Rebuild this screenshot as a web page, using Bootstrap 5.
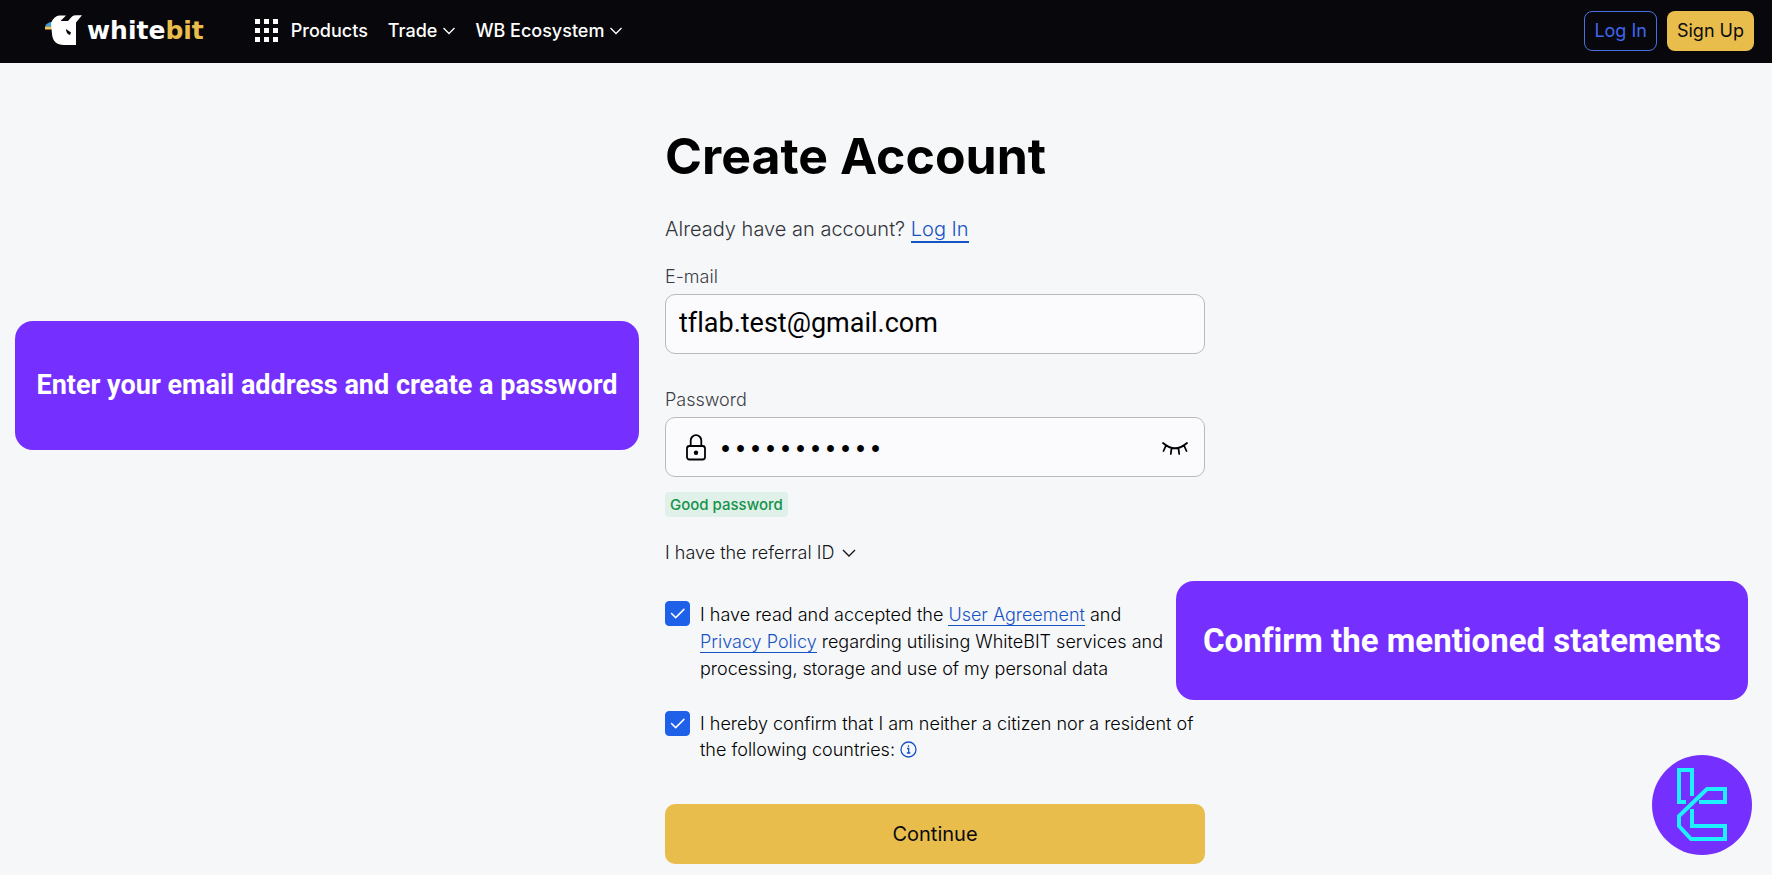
<!DOCTYPE html>
<html lang="en">
<head>
<meta charset="utf-8">
<meta name="viewport" content="width=device-width, initial-scale=1">
<title>WhiteBIT – Create Account</title>
<link href="https://cdn.jsdelivr.net/npm/bootstrap@5.3.0/dist/css/bootstrap.min.css" rel="stylesheet">
<style>
  body { font-family: Inter, "Liberation Sans", sans-serif; background: #f6f7f9; color: #0b0b0e; }
  .topbar { background: #08080c; height: 63px; padding: 0 18px 2px 45px; }
  .brand-word { font: 700 25px/28px "DejaVu Sans", sans-serif; color: #fff; }
  .brand-word span { color: #e9bd4c; }
  .main-nav { margin-left: 51px; gap: 20px; }
  .topbar .nav-link { color: #fff; font-size: 18px; font-weight: 500; line-height: 24px; padding: 0; gap: 6px; }
  .topbar .nav-products { gap: 13px; }
  .topbar .btn { font-size: 18px; line-height: 24px; height: 40px; padding: 0 10px; border-radius: 8px; }
  .topbar .btn-login { color: #3f66f0; border: 1px solid #4a70e0; padding: 0 9px; }
  .topbar-actions { gap: 10px; }
  .btn-gold, .btn-gold:hover { background: #e9bd4c; color: #0b0b0e; border: 0; }

  .signup-grid { display: grid; grid-template-columns: 624fr 566fr 547fr; padding: 0 20px 0 15px; }
  .form-column { margin-left: 26px; padding: 63px 0 11px; }
  .aside-right { margin-left: -29px; }
  .callout { background: #7530ff; color: #fff; border-radius: 18px; font-family: Roboto, sans-serif; font-weight: 700; white-space: nowrap; font-variant-ligatures: none; }
  .callout-email { margin-top: 258px; height: 129px; font-size: 27px; }
  .callout-confirm { margin-top: 518px; height: 119px; font-size: 33px; }
  .assistant { margin-top: 55px; }

  h1 { font-size: 50px; line-height: 60px; font-weight: 700; color: #000; margin: 0 0 28px; }
  .intro { font-size: 20px; line-height: 30px; font-weight: 300; color: #33353b; margin: 0 0 21px; }
  .form-column a { color: #1653c5; text-decoration: none; border-bottom: 1px solid #1653c5; }
  .form-column .intro a { border-bottom-width: 2px; }
  .form-label { font-size: 18px; line-height: 24px; font-weight: 300; color: #3c3e45; margin: 0 0 5px; display: block; }
  .field { height: 60px; background: #fbfbfd; border: 1px solid #b9babd; border-radius: 10px; margin-bottom: 34px; padding: 0 13px; }
  .field input { border: 0; background: transparent; box-shadow: none; color: #000; padding: 0; height: 56px; }
  #email { font: 400 27px/56px Roboto, sans-serif; font-variant-ligatures: none; }
  #password { font: 400 25px/50px "Liberation Mono", monospace; margin-left: 12px; padding-top: 6px; }
  .field-password { margin-bottom: 15px; padding: 0 16px 0 20px; }
  .strength { background: #dff1e8; color: #16924b; font-size: 15px; font-weight: 500; line-height: 25px; padding: 0 5px; border-radius: 4px; }
  .referral { font-size: 18px; line-height: 24px; font-weight: 300; color: #17181c; margin: 24px 0 36px; }
  .check-row { gap: 10px; }
  .form-check-input { width: 25px; height: 25px; margin: 0; border-radius: 5px; flex: none; }
  .form-check-input:checked { background-color: #1f60e8; border-color: #1f60e8;
    background-image: url("data:image/svg+xml,%3Csvg xmlns='http://www.w3.org/2000/svg' viewBox='0 0 25 25'%3E%3Cpath d='M6 12.5l4.5 4.5 9-9' fill='none' stroke='%23fff' stroke-width='1.6' stroke-linecap='round' stroke-linejoin='round'/%3E%3C/svg%3E"); }
  .form-check-label { font-size: 18px; font-weight: 300; line-height: 27px; color: #000; }
  .terms { margin-bottom: 29px; }
  .residency { margin-bottom: 41px; }
  .residency .form-check-label { line-height: 26px; }
  .residency svg { vertical-align: -2px; }
  .btn-continue { height: 60px; font-size: 20px; border-radius: 10px; }
</style>
</head>
<body>
<header class="topbar d-flex align-items-center">
  <a href="#" class="d-flex align-items-center text-decoration-none" aria-label="WhiteBIT home">
    <svg width="38" height="32" viewBox="0 0 38 32" aria-hidden="true">
      <path d="M0 11.500Q2 7 7 7l2 5z" fill="#3d9ddb"/><path d="M0 11.500h8v3H0z" fill="#eec75b"/>
      <path d="M6 8Q9 1 14 .5h7L15.500 6h7.500L27 1.500Q28.500.300 31 .3h6l-6 7.200V30H19Q8 30 7 19z" fill="#fff"/>
      <path d="M21 14l5 3.500-1 2.500q-4-1-4-6z" fill="#08080c"/>
    </svg>
    <span class="brand-word ms-1">white<span>bit</span></span>
  </a>
  <nav class="main-nav d-flex align-items-center">
    <a class="nav-link nav-products d-flex align-items-center" href="#">
      <svg width="23" height="23" viewBox="0 0 23 23" fill="#fff" aria-hidden="true"><path d="M0 0h5v5H0zM9 0h5v5H9zM18 0h5v5h-5zM0 9h5v5H0zM9 9h5v5H9zM18 9h5v5h-5zM0 18h5v5H0zM9 18h5v5H9zM18 18h5v5h-5z"/></svg>Products</a>
    <a class="nav-link d-flex align-items-center" href="#">Trade
      <svg width="12" height="8" viewBox="0 0 12 8" fill="none" stroke="#fff" stroke-width="1.300" aria-hidden="true"><path d="M.5 1L6 6.500 11.500 1"/></svg></a>
    <a class="nav-link d-flex align-items-center" href="#">WB Ecosystem
      <svg width="12" height="8" viewBox="0 0 12 8" fill="none" stroke="#fff" stroke-width="1.300" aria-hidden="true"><path d="M.5 1L6 6.500 11.500 1"/></svg></a>
  </nav>
  <div class="topbar-actions d-flex ms-auto">
    <button type="button" class="btn btn-login">Log In</button>
    <button type="button" class="btn btn-gold">Sign Up</button>
  </div>
</header>

<main class="signup-grid">
  <aside>
    <div class="callout callout-email d-flex align-items-center justify-content-center">Enter your email address and create a password</div>
  </aside>

  <form class="form-column">
    <h1>Create Account</h1>
    <p class="intro">Already have an account? <a href="#">Log In</a></p>

    <label class="form-label" for="email">E-mail</label>
    <div class="field d-flex align-items-start">
      <input type="email" id="email" class="w-100" value="tflab.test@gmail.com">
    </div>

    <label class="form-label" for="password">Password</label>
    <div class="field field-password d-flex align-items-center">
      <svg class="flex-shrink-0" width="20" height="27" viewBox="0 0 20 27" fill="none" stroke="#000" stroke-width="1.800" aria-hidden="true"><rect x="1" y="12" width="18" height="13.500" rx="2.500"/><path d="M4.700 12V6.500a5.300 5.300 0 0 1 10.600 0V12"/><circle cx="10" cy="18.700" r="2.200" fill="#000" stroke="none"/></svg>
      <input type="password" id="password" class="flex-grow-1" value="password123">
      <button type="button" class="btn p-0 border-0 d-flex" aria-label="Show password">
        <svg width="26" height="20" viewBox="0 -4 26 20" fill="none" stroke="#000" stroke-width="1.800" stroke-linecap="round" aria-hidden="true"><path d="M1 2q12 10.500 24 0M4 4.500L1.500 10M9.500 7.500L8.800 13M16.500 7.500l.7 5.500M22 4.500L24.500 10"/></svg>
      </button>
    </div>
    <div class="d-flex"><span class="strength">Good password</span></div>

    <button type="button" class="referral btn p-0 border-0 d-flex align-items-center">I have the referral ID
      <svg class="ms-2" width="14" height="8" viewBox="0 0 14 8" fill="none" stroke="#17181c" stroke-width="1.400" aria-hidden="true"><path d="M1 1l6 6 6-6"/></svg>
    </button>

    <div class="check-row terms d-flex">
      <input class="form-check-input" type="checkbox" id="terms" checked>
      <label class="form-check-label" for="terms">I have read and accepted the <a href="#">User Agreement</a> and<br><a href="#">Privacy Policy</a> regarding utilising WhiteBIT services and<br>processing, storage and use of my personal data</label>
    </div>
    <div class="check-row residency d-flex">
      <input class="form-check-input" type="checkbox" id="residency" checked>
      <label class="form-check-label" for="residency">I hereby confirm that I am neither a citizen nor a resident of<br>the following countries:
        <svg width="17" height="17" viewBox="0 0 17 17" fill="none" stroke="#1653c5" stroke-width="1.300" aria-hidden="true"><circle cx="8.500" cy="8.500" r="7.500"/><path d="M7 7.500h1.700V12M6.800 12h3.600M8.500 4.300v1.500"/></svg></label>
    </div>
    <button type="submit" class="btn btn-gold btn-continue w-100">Continue</button>
  </form>

  <aside class="aside-right">
    <div class="callout callout-confirm d-flex align-items-center justify-content-center me-1">Confirm the mentioned statements</div>
    <div class="assistant d-flex justify-content-end">
      <svg width="100" height="100" viewBox="0 0 100 100" fill="none" stroke="#1df0ff" stroke-width="4" role="img" aria-label="TradingFinder">
        <circle cx="50" cy="50" r="50" fill="#7530ff" stroke="none"/>
        <path d="M34 47H27V15H40V41M47 47H73V34H55L27 61V71L39 84H73V71H40V54"/>
      </svg>
    </div>
  </aside>
</main>
<script src="https://cdn.jsdelivr.net/npm/bootstrap@5.3.0/dist/js/bootstrap.bundle.min.js"></script>
</body>
</html>
